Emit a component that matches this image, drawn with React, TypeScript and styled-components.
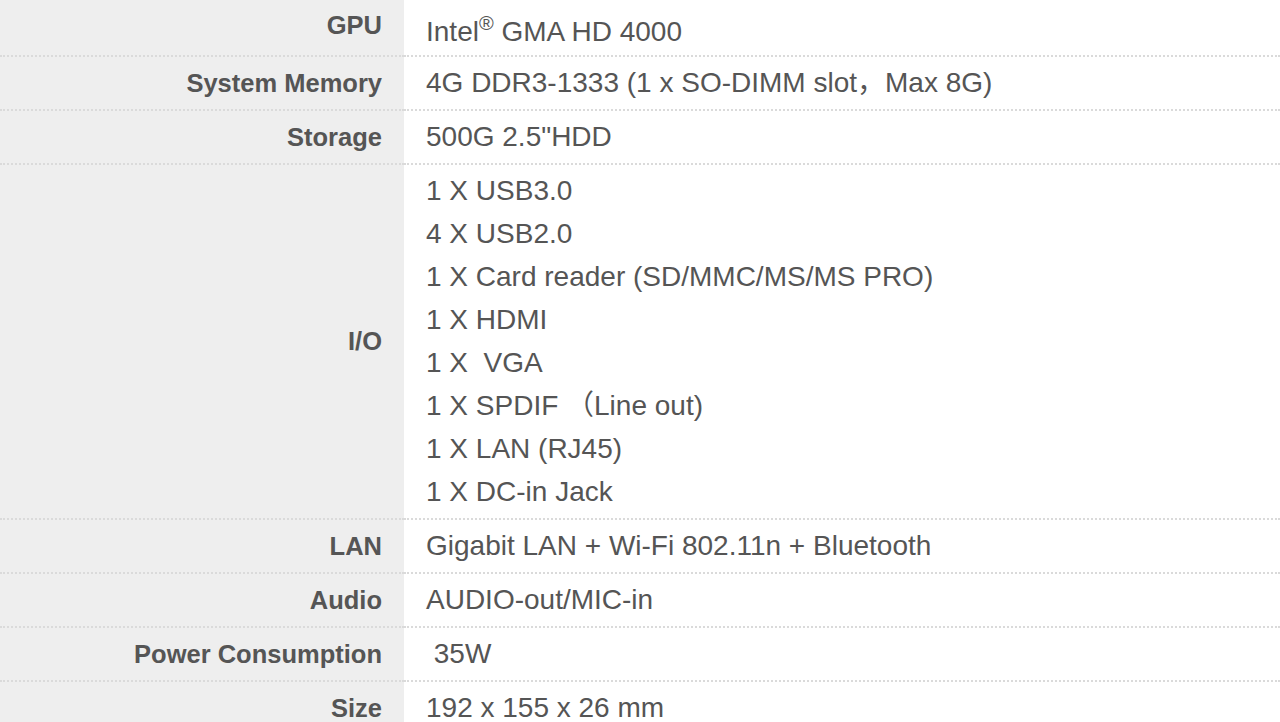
import React from "react";
import styled, { createGlobalStyle } from "styled-components";

const GlobalStyle = createGlobalStyle`
  * {
    box-sizing: border-box;
    margin: 0;
    padding: 0;
  }
  body {
    font-family: "Liberation Sans", Arial, "Noto Sans CJK SC", sans-serif;
    background: #ffffff;
    overflow: hidden;
  }
`;

// page is scrolled a little: the first row starts just above the top edge
const SpecTable = styled.div`
  display: flex;
  flex-direction: column;
  width: 1280px;
  margin-top: -5px;
`;

const Row = styled.div`
  display: grid;
  grid-template-columns: 404px 1fr;
`;

const LabelCell = styled.div`
  display: flex;
  align-items: center;
  justify-content: flex-end;
  padding: 0 22px 0 0;
  background: #eeeeee;
  border-bottom: 2px dotted #dadada;
  color: #555555;
  font-size: 25.5px;
  font-weight: 700;
  white-space: nowrap;
`;

const ValueCell = styled.div<{ $tall?: boolean }>`
  display: flex;
  flex-direction: column;
  padding: ${(p) => (p.$tall ? "15px 0 2px" : "4px 0 5px")} 22px;
  border-bottom: 2px dotted #dadada;
  color: #555555;
  font-size: 28px;
  line-height: 43px;
`;

const Line = styled.div`
  white-space: pre;
`;

const Reg = styled.sup`
  font-size: 20px;
  line-height: 0;
  position: relative;
  top: -1px;
`;

type Spec = { label: string; lines: React.ReactNode[]; tall?: boolean };

const specs: Spec[] = [
  {
    label: "GPU",
    tall: true,
    lines: [
      <>
        Intel<Reg>®</Reg> GMA HD 4000
      </>,
    ],
  },
  { label: "System Memory", lines: ["4G DDR3-1333 (1 x SO-DIMM slot，Max 8G)"] },
  { label: "Storage", lines: ['500G 2.5"HDD'] },
  {
    label: "I/O",
    lines: [
      "1 X USB3.0",
      "4 X USB2.0",
      "1 X Card reader (SD/MMC/MS/MS PRO)",
      "1 X HDMI",
      "1 X \u00a0VGA",
      "1 X SPDIF （Line out)",
      "1 X LAN (RJ45)",
      "1 X DC-in Jack",
    ],
  },
  { label: "LAN", lines: ["Gigabit LAN + Wi-Fi 802.11n + Bluetooth"] },
  { label: "Audio", lines: ["AUDIO-out/MIC-in"] },
  { label: "Power Consumption", lines: ["\u00a035W"] },
  { label: "Size", lines: ["192 x 155 x 26 mm"] },
];

export default function App() {
  return (
    <>
      <GlobalStyle />
      <SpecTable>
        {specs.map((spec) => (
          <Row key={spec.label}>
            <LabelCell>{spec.label}</LabelCell>
            <ValueCell $tall={spec.tall}>
              {spec.lines.map((line, i) => (
                <Line key={i}>{line}</Line>
              ))}
            </ValueCell>
          </Row>
        ))}
      </SpecTable>
    </>
  );
}
